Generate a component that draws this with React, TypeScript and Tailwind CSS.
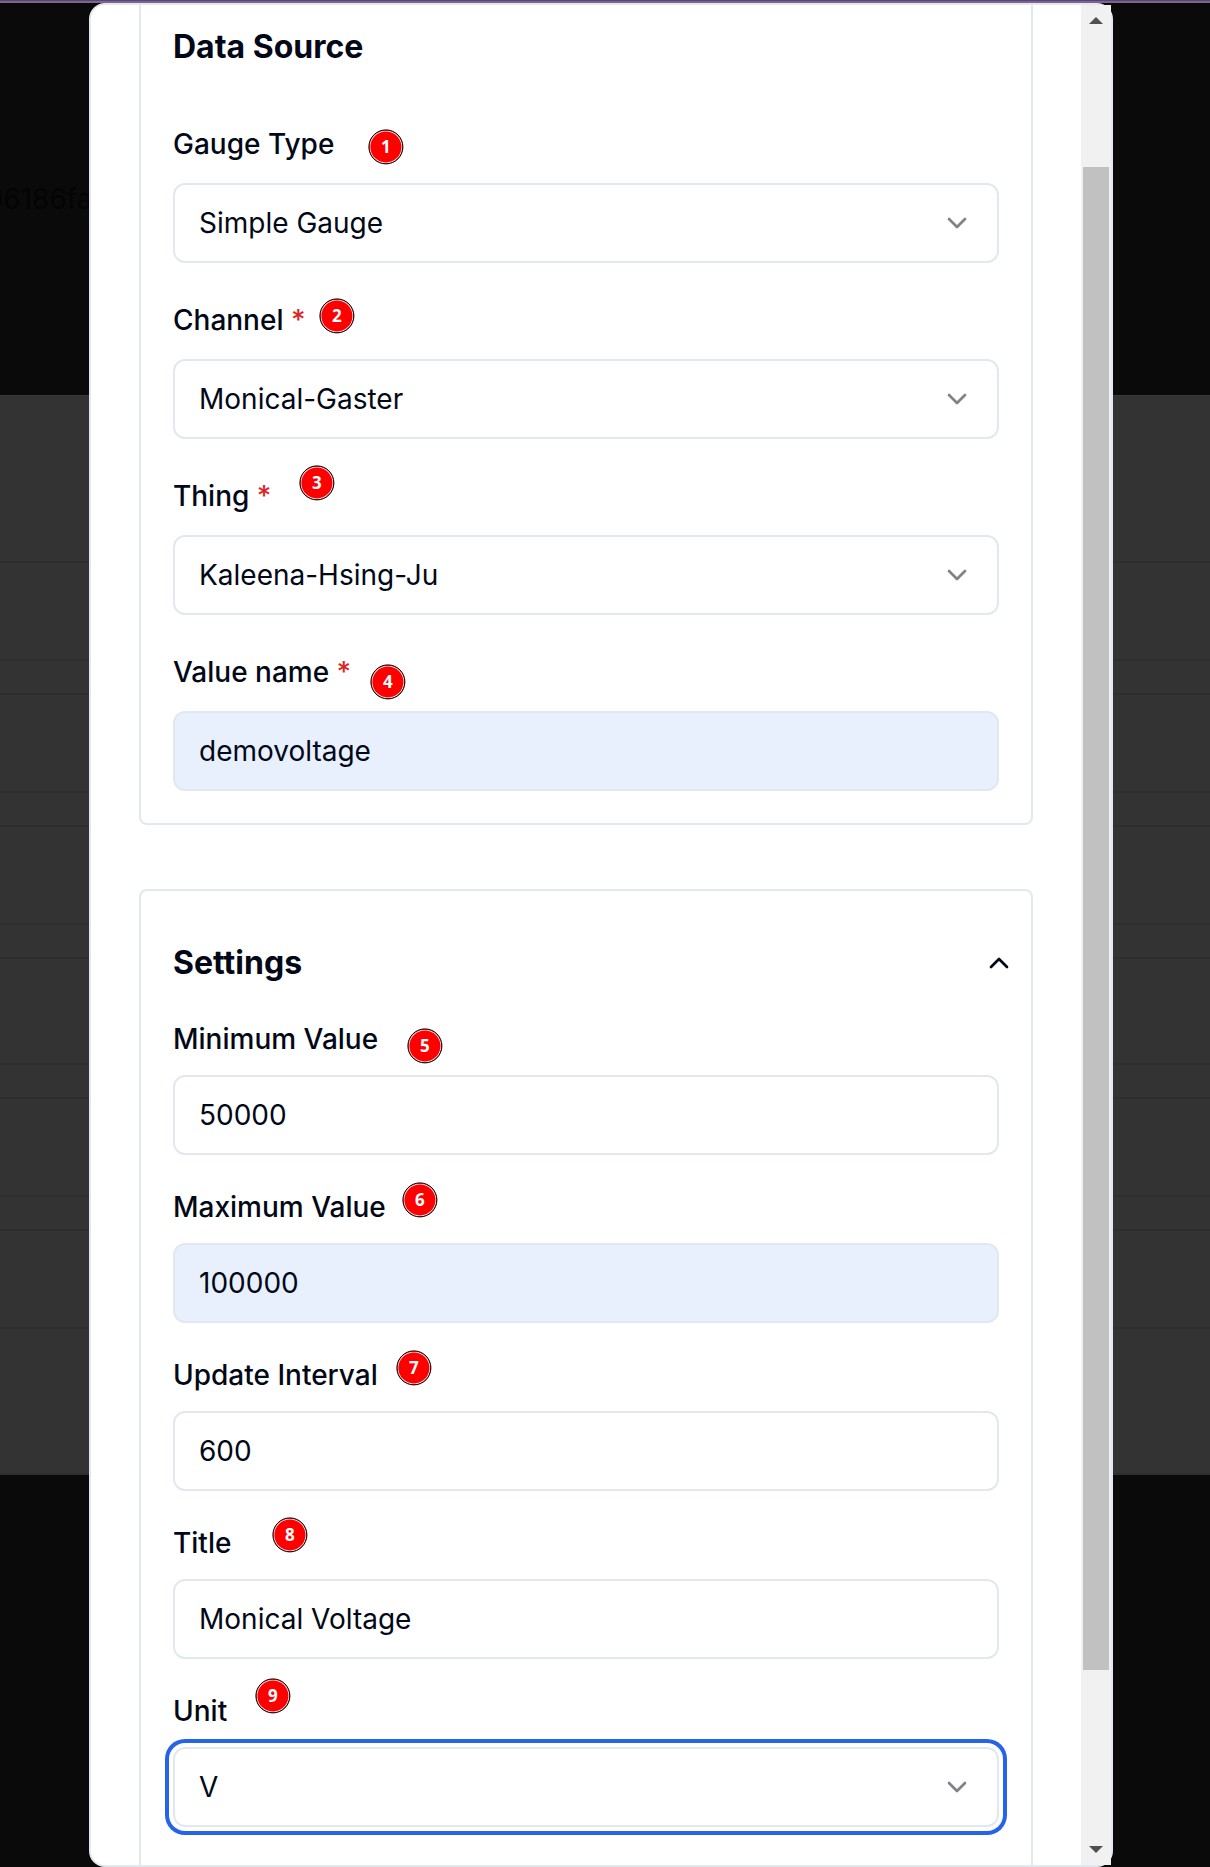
import { ChevronDown, ChevronUp } from "lucide-react";

type FieldProps = {
  label: string;
  value: string;
  step: number;
  badge: string;
  required?: boolean;
  select?: boolean;
  filled?: boolean;
  focused?: boolean;
  compact?: boolean;
};

function Field({ label, value, step, badge, required, select, filled, focused, compact }: FieldProps) {
  return (
    <div className={compact ? "flex flex-col gap-[22px]" : "flex flex-col gap-[25px]"}>
      <div className="relative flex h-7 items-center text-[28px] leading-7 font-medium">
        <span className="whitespace-pre">
          {label}
          {required && <span className="text-[#dc2626]"> *</span>}
        </span>
        <span
          className={`absolute flex size-[35px] translate-x-[0.4px] translate-y-[0.4px] items-center justify-center rounded-full border border-black bg-[#ff0000] font-['Open_Sans',sans-serif] text-[17px] leading-none font-bold text-white shadow-[inset_0_0_0_1px_#f4dcdc] ${badge}`}
        >
          {step}
        </span>
      </div>
      <div
        className={`flex h-20 items-center justify-between rounded-xl border-2 border-[#e2e8f0] px-6 text-[28px] leading-10 ${
          filled ? "bg-[#e8f0fe]" : "bg-white"
        } ${focused ? "ring-4 ring-[#2563eb] ring-offset-4 ring-offset-white" : ""}`}
      >
        <span>{value}</span>
        {select && <ChevronDown className="size-8 opacity-50" />}
      </div>
    </div>
  );
}

const rowHeights = [
  "h-[98px]",
  "h-[34px]",
  "h-[98px]",
  "h-[34px]",
  "h-[98px]",
  "h-[34px]",
  "h-[106px]",
  "h-[34px]",
  "h-[98px]",
  "h-[34px]",
  "h-[98px]",
  "h-[146px]",
  "h-[2px]",
];

function BackdropRows() {
  return (
    <div className="h-[1080px] border-t border-[#393939] bg-[#333333] pt-[165px]">
      {rowHeights.map((height, i) => (
        <div key={i} className={`border-t-2 border-[#2e2e2e] ${height}`} />
      ))}
    </div>
  );
}

export default function App() {
  return (
    <div className="relative h-[1867px] w-[1210px] overflow-hidden bg-[#0a0a0a] font-['Inter',sans-serif] text-[#020817]">
      <div className="h-px bg-[#58446f]" />
      <div className="h-0.5 bg-[#7b6592]" />
      <div className="flex h-[392px] items-start pt-[176px]">
        <span className="-ml-[14px] text-[28px] leading-10 text-[#040404]">96186fa</span>
      </div>
      <BackdropRows />

      <div className="absolute top-[3px] left-[89px] flex h-[1864px] w-[1024px] rounded-2xl border-2 border-[#e2e8f0] bg-white">
        <div className="flex h-[1860px] grow flex-col gap-16 overflow-hidden px-12">
          <section className="rounded-b-lg border-2 border-t-0 border-[#e2e8f0] px-8 pt-[26px] pb-8">
            <h2 className="mb-[67px] text-[32px] leading-8 font-bold">Data Source</h2>
            <div className="flex flex-col gap-[43px]">
              <Field label="Gauge Type" value="Simple Gauge" step={1} select badge="left-[195px] -top-[1px]" />
              <Field label="Channel" value="Monical-Gaster" step={2} required select badge="left-[146px] -top-[8px]" />
              <Field label="Thing" value="Kaleena-Hsing-Ju" step={3} required select badge="left-[126px] -top-[17px]" />
              <Field label="Value name" value="demovoltage" step={4} required filled badge="left-[197px] top-[6px]" />
            </div>
          </section>

          <section className="h-[1000px] shrink-0 rounded-t-lg border-2 border-b-0 border-[#e2e8f0] px-8 pt-14">
            <div className="-mr-4 mb-[46px] flex h-8 items-center justify-between">
              <h2 className="text-[32px] leading-8 font-bold">Settings</h2>
              <ChevronUp className="size-8" />
            </div>
            <div className="flex flex-col gap-[38px]">
              <Field compact label="Minimum Value" value="50000" step={5} badge="left-[234px] top-[3px]" />
              <Field compact label="Maximum Value" value="100000" step={6} filled badge="left-[229px] -top-[11px]" />
              <Field compact label="Update Interval" value="600" step={7} badge="left-[223px] -top-[11px]" />
              <Field compact label="Title" value="Monical Voltage" step={8} badge="left-[99px] -top-[12px]" />
              <Field compact label="Unit" value="V" step={9} select focused badge="left-[82px] -top-[19px]" />
            </div>
          </section>
        </div>

        <div className="flex h-[1860px] w-[30px] shrink-0 flex-col items-center justify-between bg-[#f1f1f1] pt-3 pb-3">
          <svg viewBox="0 0 14 7" className="h-[7px] w-[14px]" fill="#505050">
            <path d="M0 7 L7 0 L14 7 Z" />
          </svg>
          <div className="mt-[143px] mb-auto h-[1503px] w-[26px] shrink-0 bg-[#c1c1c1]" />
          <svg viewBox="0 0 14 7" className="h-[7px] w-[14px]" fill="#505050">
            <path d="M0 0 L7 7 L14 0 Z" />
          </svg>
        </div>
      </div>
    </div>
  );
}
